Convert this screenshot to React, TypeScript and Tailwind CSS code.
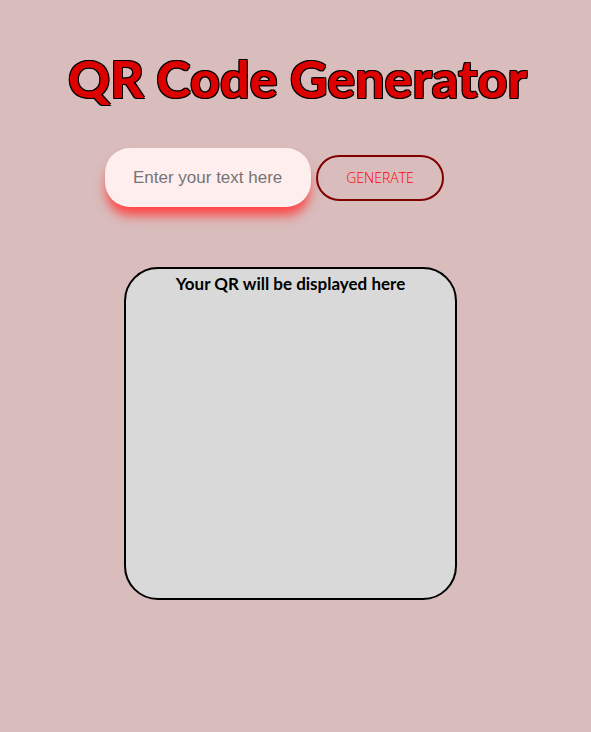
export default function App() {
  return (
    <main className="flex min-h-screen flex-col items-center bg-[#d9bcbc] pt-[46px] font-['Liberation_Sans',Arial,sans-serif]">
      <h1 className="ml-1 font-['Lato',sans-serif] text-[52px] leading-[64px] font-black whitespace-nowrap text-[#dc0000] [text-shadow:-1px_-1px_0_#000,1px_-1px_0_#000,-1px_1px_0_#000,1px_1px_0_#000]">
        QR Code Generator
      </h1>
      <form className="mt-[38px] mr-[42px] flex items-center gap-[5px]" onSubmit={(e) => e.preventDefault()}>
        <input
          type="text"
          aria-label="Text to encode"
          placeholder="Enter your text here"
          className="h-[59px] w-[206px] rounded-[25px] bg-[#ffeeee] px-7 text-[17px] shadow-[0_10px_12px_-2px_#ff4040] outline-none placeholder:text-[#757575]"
        />
        <button
          type="submit"
          className="h-[46px] w-32 rounded-3xl border-2 border-[#800000] font-['Open_Sans',sans-serif] text-[14px] font-light text-[#ff0000]"
        >
          GENERATE
        </button>
      </form>
      <section className="mt-15 mr-2.5 h-[333px] w-[333px] rounded-[34px] border-2 border-black bg-[#d9d9d9] text-center">
        <h2 className="font-['Lato',sans-serif] text-[17px] leading-[30px] font-bold">
          Your QR will be displayed here
        </h2>
      </section>
    </main>
  );
}
